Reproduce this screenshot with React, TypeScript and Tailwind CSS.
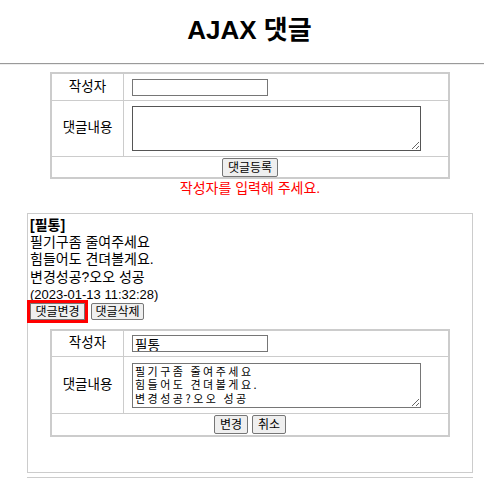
import React from "react";

const KR = "font-['Liberation_Sans','Noto_Sans_CJK_KR',sans-serif]";

/* ── default-looking browser button ─────────────────────── */
function Btn({ label, w, h, outlined = false }: { label: string; w: string; h: string; outlined?: boolean }) {
  return (
    <button
      type="button"
      className={`${w} ${h} shrink-0 flex items-center justify-center bg-[#efefef] border border-[#767676] text-[12px] leading-none text-black ${
        outlined ? "rounded-none outline-[3px] outline outline-[#ff0000]" : "rounded-[2px]"
      }`}
    >
      {label}
    </button>
  );
}

/* ── writer / content form table ────────────────────────── */
function FormTable({
  writer,
  content,
  row1,
  row2,
  row3,
  areaBorder,
  children,
}: {
  writer: string;
  content: string;
  row1: string;
  row2: string;
  row3: string;
  areaBorder: string;
  children: React.ReactNode;
}) {
  return (
    <div className="w-[400px] border-2 border-[#cccccc] text-[13.5px]">
      <div className={`flex ${row1} border-b border-[#cccccc]`}>
        <div className="w-[72px] border-r border-[#cccccc] flex items-center justify-center">작성자</div>
        <div className="flex-1 flex items-center pl-[8px]">
          <input
            defaultValue={writer}
            className="w-[136px] h-[17px] border border-[#767676] px-[2px] text-[13.5px] leading-none outline-none"
          />
        </div>
      </div>
      <div className={`flex ${row2} border-b border-[#cccccc]`}>
        <div className="w-[72px] border-r border-[#cccccc] flex items-center justify-center">댓글내용</div>
        <div className="flex-1 flex items-center pl-[8px]">
          <textarea
            defaultValue={content}
            className={`w-[289px] h-[45px] border ${areaBorder} px-[2px] pt-[1px] text-[11px] leading-[13.5px] tracking-[2.5px] font-['Noto_Sans_CJK_KR',monospace] outline-none overflow-hidden`}
          />
        </div>
      </div>
      <div className={`flex ${row3} justify-center items-start pt-[1px] gap-[4px]`}>{children}</div>
    </div>
  );
}

export default function App() {
  const lines = ["필기구좀 줄여주세요", "힘들어도 견뎌볼게요.", "변경성공?오오 성공"];

  return (
    <div className={`w-[484px] h-[478px] overflow-hidden bg-white text-black ${KR}`}>
      {/* Title */}
      <div className="w-[499px] h-[63px] flex items-center justify-center pb-[3px]">
        <h1 className="text-[26px] font-bold leading-none">AJAX 댓글</h1>
      </div>
      <div className="h-[2px] border-t border-[#9a9a9a] bg-[#eeeeee]" />

      {/* New comment form */}
      <div className="ml-[50px] mt-[7px]">
        <FormTable
          writer=""
          content=""
          row1="h-[27px]"
          row2="h-[56px]"
          row3="h-[20px]"
          areaBorder="border-[#555555]"
        >
          <Btn label="댓글등록" w="w-[56px]" h="h-[19px]" />
        </FormTable>
        <p className="w-[400px] text-center text-[14px] leading-[18px] text-[#ff0000]">작성자를 입력해 주세요.</p>
      </div>

      {/* Comment list */}
      <div className="ml-[27px] mt-[16px] w-[446px] border border-[#cccccc] pb-[35px]">
        <div className="pl-[2px] pt-[3px] text-[14px] leading-[17.2px]">
          <p className="font-bold">[필통]</p>
          {lines.map((l) => (
            <p key={l}>{l}</p>
          ))}
          <p className="text-[13px]">(2023-01-13 11:32:28)</p>
        </div>
        <div className="flex gap-[6px] pl-[2px]">
          <Btn label="댓글변경" w="w-[55px]" h="h-[17px]" outlined />
          <Btn label="댓글삭제" w="w-[53px]" h="h-[17px]" />
        </div>
        <div className="ml-[22px] mt-[9px]">
          <FormTable
            writer="필통"
            content={lines.join("\n")}
            row1="h-[26px]"
            row2="h-[57px]"
            row3="h-[21px]"
            areaBorder="border-[#767676]"
          >
            <Btn label="변경" w="w-[34px]" h="h-[19px]" />
            <Btn label="취소" w="w-[34px]" h="h-[19px]" />
          </FormTable>
        </div>
      </div>
      <div className="ml-[27px] mt-[4px] w-[446px] border-t border-[#cccccc]" />
    </div>
  );
}
